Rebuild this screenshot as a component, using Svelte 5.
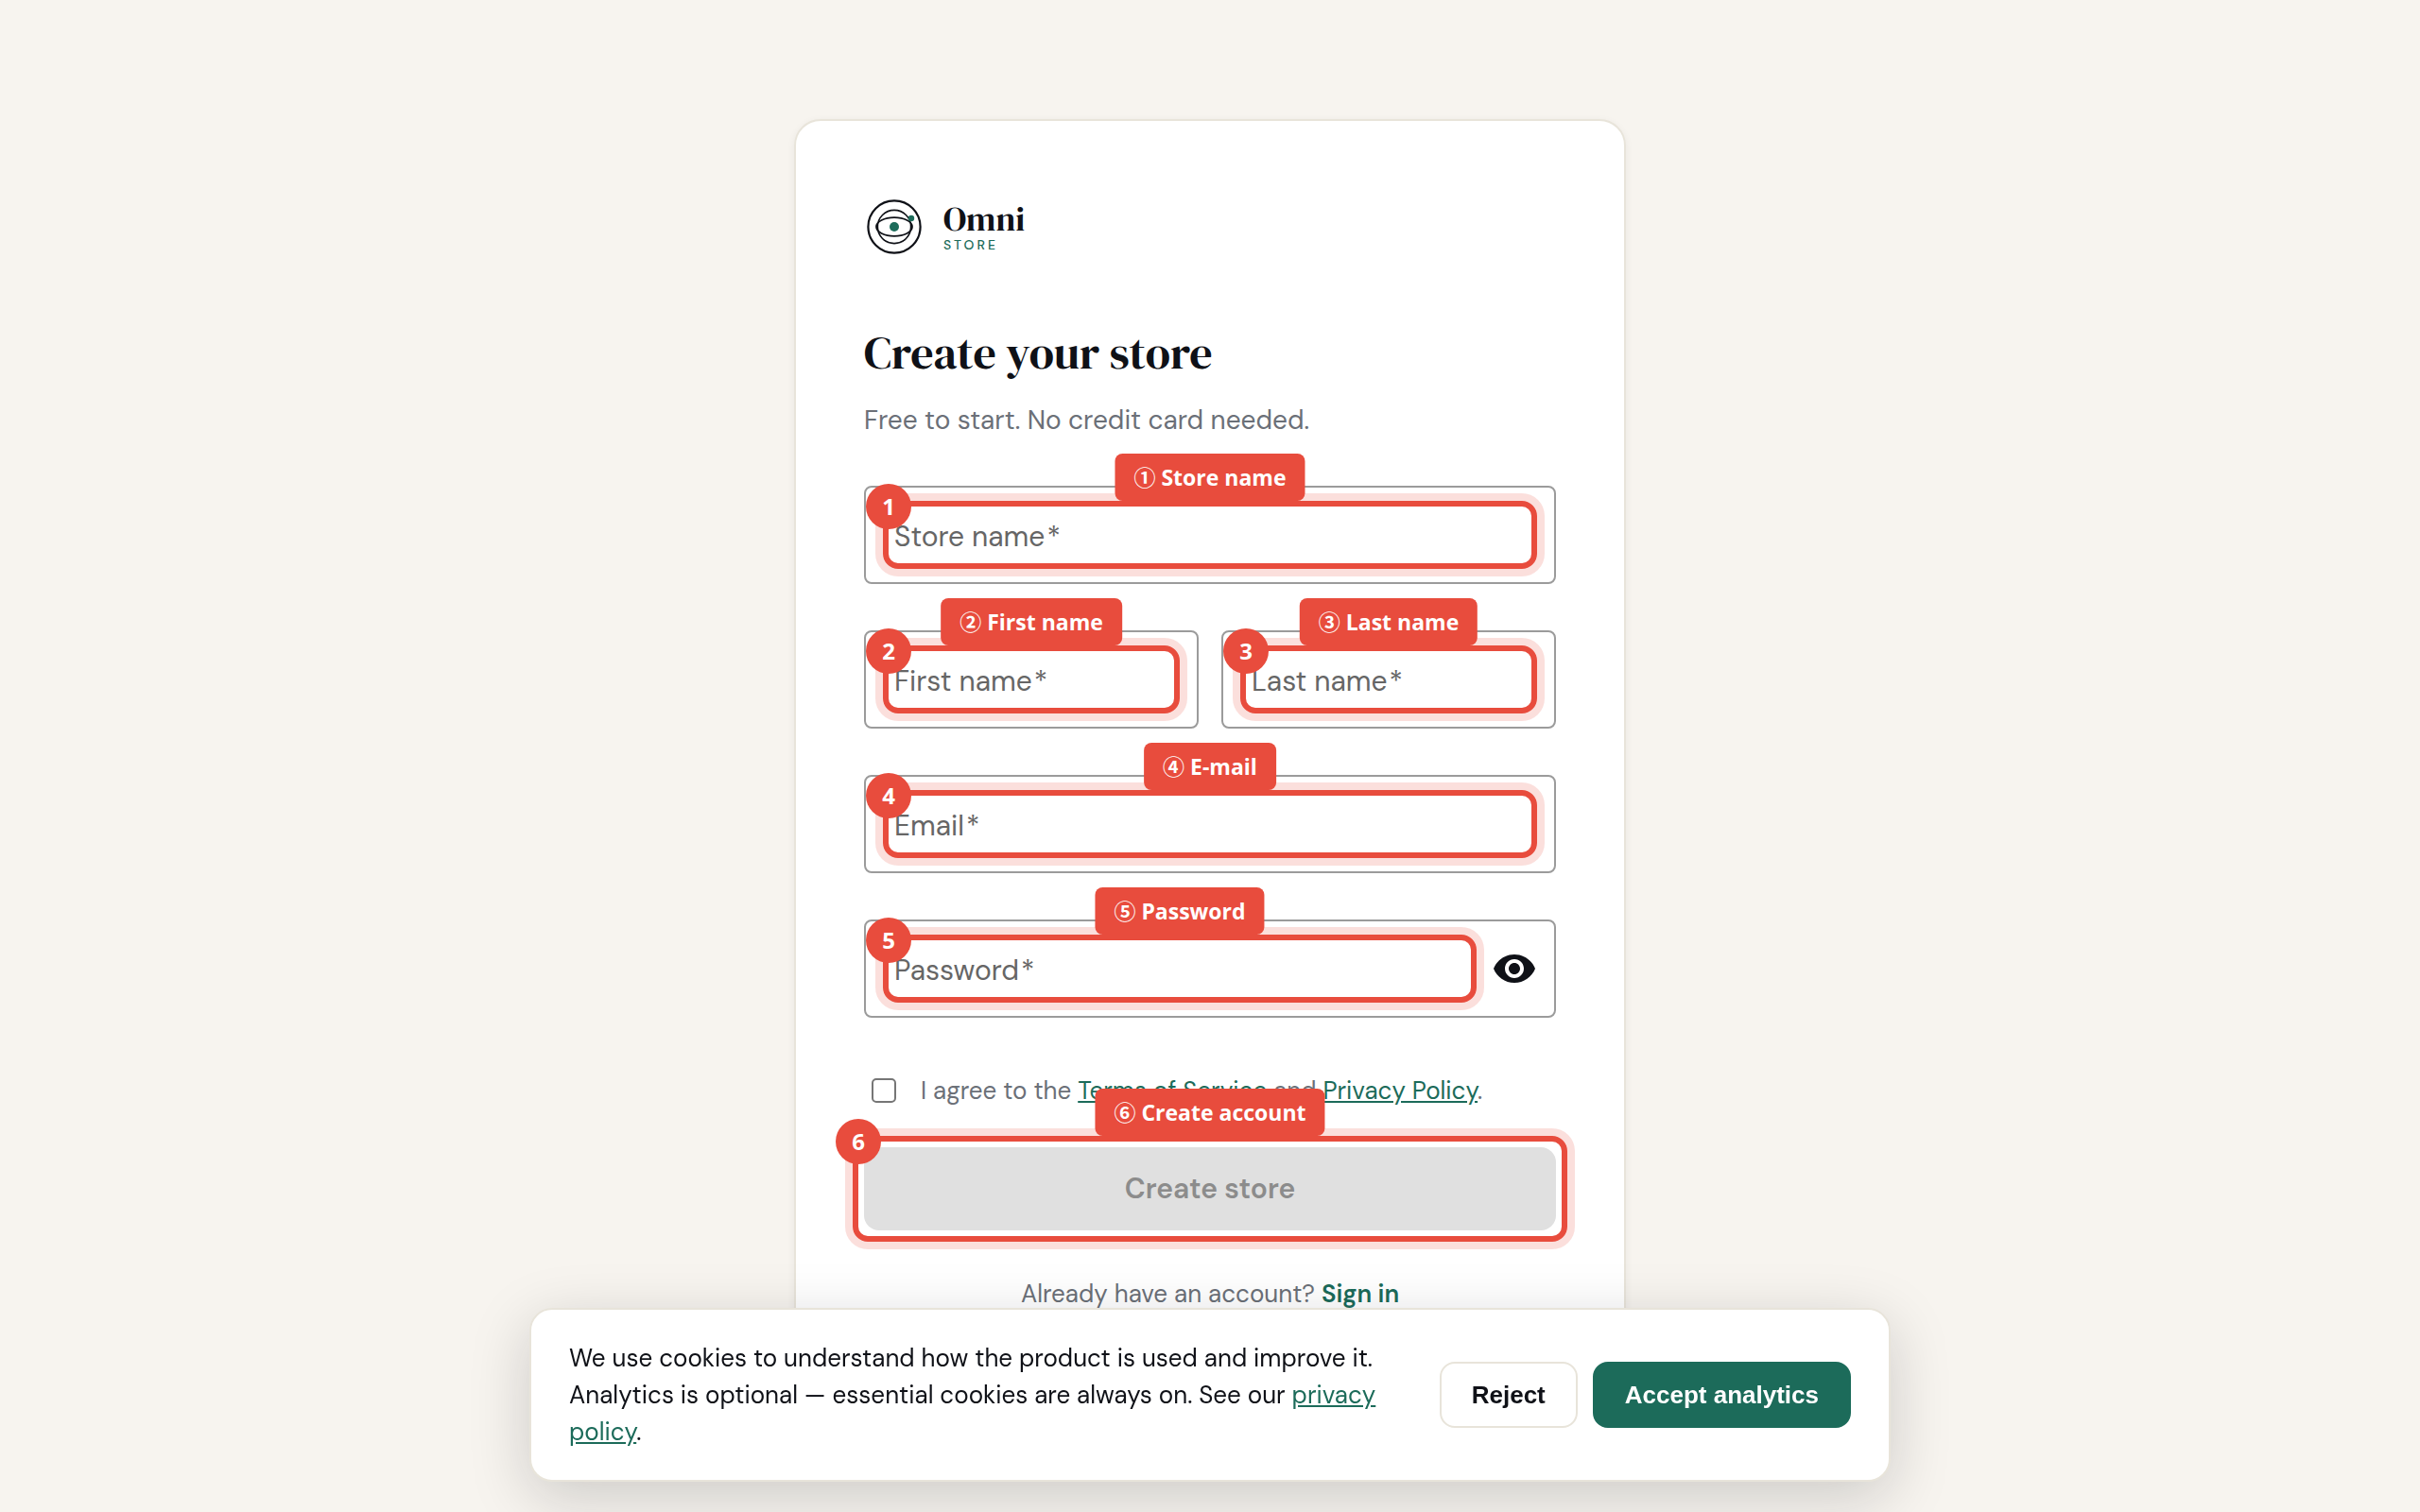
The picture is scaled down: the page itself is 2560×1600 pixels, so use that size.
<script lang="ts">
	type Field = {
		id: string;
		label: string;
		hint: string;
		type: string;
	};

	const storeField: Field = { id: 'store-name', label: 'Store name', hint: '① Store name', type: 'text' };
	const nameFields: Field[] = [
		{ id: 'first-name', label: 'First name', hint: '② First name', type: 'text' },
		{ id: 'last-name', label: 'Last name', hint: '③ Last name', type: 'text' }
	];
	const emailField: Field = { id: 'email', label: 'Email', hint: '④ E-mail', type: 'email' };
	const passwordField: Field = { id: 'password', label: 'Password', hint: '⑤ Password', type: 'password' };

	let values: Record<string, string> = $state({});
	let showPassword = $state(false);
	let agreed = $state(false);
</script>

{#snippet marker(step: number, hint: string)}
	<span class="marker" aria-hidden="true">
		<span class="marker-label">{hint}</span>
		<span class="marker-step">{step}</span>
	</span>
{/snippet}

{#snippet textField(field: Field, step: number)}
	<div class="field">
		<div class="control">
			<input
				id={field.id}
				type={field.id === 'password' && showPassword ? 'text' : field.type}
				bind:value={values[field.id]}
				required
			/>
			{#if !values[field.id]}
				<label for={field.id}>{field.label}<span class="required">*</span></label>
			{/if}
			{@render marker(step, field.hint)}
		</div>
		{#if field.id === 'password'}
			<button
				class="toggle"
				type="button"
				aria-label="Show password"
				onclick={() => (showPassword = !showPassword)}
			>
				<svg viewBox="0 0 24 24" aria-hidden="true">
					<path
						d="M12 4.5C7 4.5 2.73 7.61 1 12c1.73 4.39 6 7.5 11 7.5s9.27-3.11 11-7.5c-1.73-4.39-6-7.5-11-7.5zM12 17c-2.76 0-5-2.24-5-5s2.24-5 5-5 5 2.24 5 5-2.24 5-5 5zm0-8c-1.66 0-3 1.34-3 3s1.34 3 3 3 3-1.34 3-3-1.34-3-3-3z"
					/>
				</svg>
			</button>
		{/if}
	</div>
{/snippet}

<main class="page">
	<section class="card">
		<div class="brand">
			<svg viewBox="0 0 64 64" fill="none" aria-hidden="true">
				<circle cx="32" cy="32" r="27.6" stroke="#0f1117" stroke-width="2.2" />
				<circle cx="32" cy="32" r="17.6" stroke="#0f1117" stroke-width="1.6" />
				<ellipse cx="32" cy="32" rx="19" ry="9.8" stroke="#0f1117" stroke-width="1.8" />
				<circle cx="32" cy="32" r="5" fill="#1c6b5a" />
				<circle cx="50" cy="23" r="3.2" fill="#1c6b5a" />
			</svg>
			<div class="wordmark">
				<span class="brand-name">Omni</span>
				<span class="brand-sub">STORE</span>
			</div>
		</div>

		<h1>Create your store</h1>
		<p class="subtitle">Free to start. No credit card needed.</p>

		<form onsubmit={(e) => e.preventDefault()}>
			{@render textField(storeField, 1)}
			<div class="row">
				{#each nameFields as field, i}
					{@render textField(field, i + 2)}
				{/each}
			</div>
			{@render textField(emailField, 4)}
			{@render textField(passwordField, 5)}

			<div class="terms">
				<input id="terms" type="checkbox" bind:checked={agreed} />
				<label for="terms">
					I agree to the <a href="/terms">Terms of Service</a> and <a href="/privacy">Privacy Policy</a>.
				</label>
			</div>

			<div class="submit">
				<button type="submit" disabled={!agreed}>Create store</button>
				{@render marker(6, '⑥ Create account')}
			</div>
		</form>

		<p class="signin">Already have an account? <a href="/login">Sign in</a></p>
	</section>
</main>

<aside class="cookies" aria-label="Cookies">
	<p>
		We use cookies to understand how the product is used and improve it. Analytics is optional —
		essential cookies are always on. See our <a href="/privacy">privacy policy</a>.
	</p>
	<div class="actions">
		<button class="reject" type="button">Reject</button>
		<button class="accept" type="button">Accept analytics</button>
	</div>
</aside>

<style>
	:global(body) {
		--ink: #0f1117;
		--muted: #6b7078;
		--green: #1c6b5a;
		--line: #e8e4da;
		--mark: #e84c3d;
		--sans: 'DM Sans', Lato, sans-serif;
		--serif: 'DM Serif Display', 'Liberation Serif', serif;
		background: #f7f4ef;
		color: var(--ink);
		font-family: var(--sans);
	}

	.page {
		display: flex;
		justify-content: center;
		padding: 126px 32px;
		box-sizing: border-box;
		min-height: 100vh;
		align-items: flex-start;
	}

	.card {
		box-sizing: border-box;
		width: 100%;
		max-width: 880px;
		padding: 72px;
		background: #fff;
		border: 2px solid var(--line);
		border-radius: 28px;
		box-shadow: 0 2px 8px rgba(15, 17, 23, 0.06);
	}

	.brand {
		display: flex;
		align-items: center;
		gap: 20px;
		padding: 8px 0;
	}

	.brand svg {
		width: 64px;
		height: 64px;
	}

	.wordmark {
		display: flex;
		flex-direction: column;
	}

	.brand-name {
		font: 400 36px/38px var(--serif);
	}

	.brand-sub {
		color: var(--green);
		font-size: 14px;
		font-weight: 500;
		letter-spacing: 3px;
		line-height: 16px;
	}

	h1 {
		margin: 63px 0 0;
		font: 400 48px/60px var(--serif);
	}

	.subtitle {
		margin: 22px 0 0;
		color: var(--muted);
		font-size: 28px;
		line-height: 40px;
	}

	form {
		display: flex;
		flex-direction: column;
		gap: 49px;
		margin-top: 49px;
	}

	.row {
		display: grid;
		grid-template-columns: 1fr 1fr;
		gap: 24px;
	}

	.field {
		display: flex;
		align-items: center;
		box-sizing: border-box;
		height: 104px;
		padding: 0 30px;
		border: 2px solid #9b9b9b;
		border-radius: 8px;
	}

	.control {
		position: relative;
		display: grid;
		flex: 1;
		min-width: 0;
	}

	.control > input,
	.control > label {
		grid-area: 1 / 1;
		height: 48px;
		font: 30px/52px var(--sans);
	}

	.control > input {
		box-sizing: border-box;
		width: 100%;
		padding: 0;
		border: 0;
		outline: 0;
		background: transparent;
		color: var(--ink);
	}

	.control > label {
		color: #666;
		pointer-events: none;
	}

	.required {
		margin-left: 2px;
	}

	.toggle {
		display: flex;
		margin-left: 28px;
		margin-right: -12px;
		padding: 0;
		border: 0;
		background: none;
		cursor: pointer;
	}

	.toggle svg {
		width: 48px;
		height: 48px;
		fill: var(--ink);
	}

	/* numbered walkthrough outline around a control */
	.marker {
		position: absolute;
		inset: -12px;
		border: 6px solid var(--mark);
		border-radius: 16px;
		box-shadow: 0 0 0 8px rgba(232, 76, 61, 0.18);
		color: #fff;
		font-family: 'Open Sans', 'Noto Sans CJK JP', sans-serif;
		font-weight: 700;
		pointer-events: none;
	}

	.marker-label {
		position: absolute;
		bottom: 100%;
		left: 50%;
		margin-bottom: 6px;
		padding: 0 20px;
		border-radius: 8px;
		background: var(--mark);
		font-size: 23px;
		line-height: 50px;
		transform: translateX(-50%);
		white-space: nowrap;
	}

	.marker-step {
		position: absolute;
		top: -24px;
		left: -24px;
		width: 48px;
		height: 48px;
		border-radius: 50%;
		background: var(--mark);
		font-size: 24px;
		line-height: 48px;
		text-align: center;
	}

	.terms {
		display: flex;
		align-items: center;
		gap: 26px;
		padding: 8px 8px 0;
		color: var(--muted);
		font-size: 26px;
		line-height: 40px;
	}

	.terms input {
		appearance: none;
		width: 26px;
		height: 26px;
		margin: 0;
		border: 2px solid #767676;
		border-radius: 5px;
		background: #fff;
	}

	.terms input:checked {
		background: var(--green);
	}

	.terms a,
	.cookies a {
		color: var(--green);
		text-decoration: underline;
		text-underline-offset: 2px;
	}

	.submit {
		position: relative;
		margin-top: -9px;
	}

	.submit button {
		display: block;
		width: 100%;
		height: 88px;
		border: 0;
		border-radius: 16px;
		background: var(--green);
		color: #fff;
		font: 600 30px/40px var(--sans);
	}

	.submit button:disabled {
		background: #e0e0e0;
		color: #8c8c8c;
	}

	.signin {
		margin: 47px 0 0;
		color: var(--muted);
		font-size: 26px;
		line-height: 40px;
		text-align: center;
	}

	.signin a {
		color: var(--green);
		font-weight: 600;
		text-decoration: none;
	}

	.cookies {
		position: fixed;
		right: 32px;
		bottom: 32px;
		left: 32px;
		display: flex;
		align-items: center;
		gap: 40px;
		box-sizing: border-box;
		max-width: 1440px;
		margin: 0 auto;
		padding: 30px 40px 31px;
		background: #fff;
		border: 2px solid var(--line);
		border-radius: 24px;
		box-shadow: 0 16px 64px rgba(15, 17, 23, 0.18);
	}

	.cookies p {
		flex: 1;
		margin: 0;
		padding-top: 2px;
		font-size: 26px;
		line-height: 39px;
	}

	.actions {
		display: flex;
		gap: 16px;
	}

	.actions button {
		height: 70px;
		padding: 0 32px;
		border: 2px solid var(--line);
		border-radius: 16px;
		background: #fff;
		color: var(--ink);
		font: bold 26px/30px 'Liberation Sans', Arial, sans-serif;
		cursor: pointer;
	}

	.actions .accept {
		border-color: var(--green);
		background: var(--green);
		color: #fff;
	}
</style>
